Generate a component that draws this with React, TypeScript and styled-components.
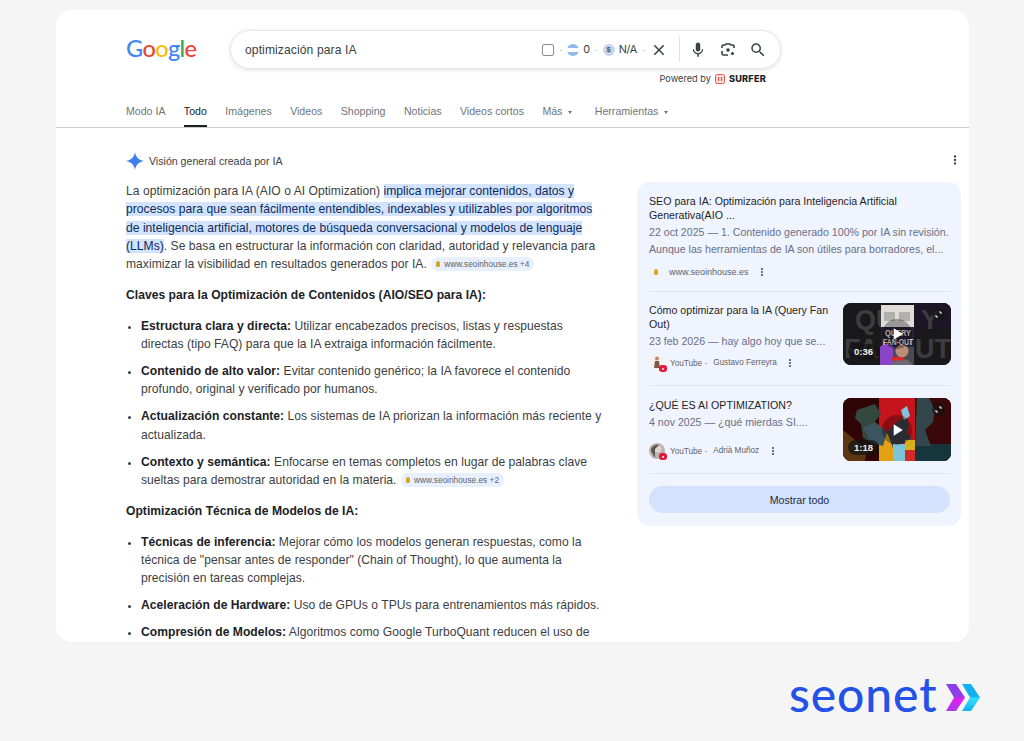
import React from 'react';
import styled, { createGlobalStyle } from 'styled-components';
import { MdMic, MdSearch, MdClose, MdPlayArrow, MdMoreVert } from 'react-icons/md';

const GlobalStyle = createGlobalStyle`
  html, body {
    margin: 0;
    padding: 0;
    background: #f5f5f5;
    font-family: "Liberation Sans", Arial, sans-serif;
  }
`;

const Page = styled.div`
  width: 1024px;
  height: 741px;
  overflow: hidden;
  box-sizing: border-box;
  padding: 10px 55px 0 56px;
`;

const Card = styled.div`
  height: 632px;
  background: #fff;
  border-radius: 16px;
  overflow: hidden;
`;

// Cabecera
const Header = styled.div`
  display: flex;
  align-items: flex-start;
  padding: 20px 0 0 70px;
  height: 58px;
`;

const Logo = styled.div`
  width: 104px;
  padding-top: 3px;
  font-family: Lato, sans-serif;
  font-size: 23.5px;
  line-height: 30px;
  letter-spacing: -0.6px;
  font-weight: 500;
`;

const LogoLetter = styled.span<{ $c: string }>`
  color: ${p => p.$c};
`;

const SearchColumn = styled.div`
  width: 551px;
`;

const SearchBox = styled.div`
  height: 39px;
  box-sizing: border-box;
  border: 1px solid #e6e7ea;
  border-radius: 20px;
  box-shadow: 0 1px 4px rgba(32, 33, 36, 0.14);
  display: flex;
  align-items: center;
  padding: 0 13px 0 14px;
  background: #fff;
`;

const Query = styled.div`
  flex: 1;
  font-size: 12.1px;
  color: #3c4043;
  letter-spacing: 0.1px;
`;

const Check = styled.span`
  width: 10px;
  height: 10px;
  border: 1px solid #8a8d91;
  border-radius: 2px;
`;

const Dot = styled.span`
  color: #9aa0a6;
  font-size: 9px;
  margin: 0 5px;
`;

const Metric = styled.span`
  font-family: Inter, sans-serif;
  font-size: 10.8px;
  letter-spacing: -0.3px;
  color: #3c4043;
  margin-left: 4px;
`;

const SmallCircle = styled.span<{ $bg: string }>`
  width: 12px;
  height: 12px;
  border-radius: 50%;
  background: ${p => p.$bg};
  display: inline-flex;
  align-items: center;
  justify-content: center;
  font-size: 7.5px;
  font-weight: 700;
  color: #3c5578;
`;

const Flag = styled(SmallCircle)`
  background: linear-gradient(#8fbce6 0 34%, #fff 34% 66%, #8fbce6 66%);
`;

const IconButton = styled.span<{ $ml: number }>`
  display: inline-flex;
  margin-left: ${p => p.$ml}px;
  color: #3c4043;
`;

const VSep = styled.span`
  width: 1px;
  height: 25px;
  background: #dfe1e5;
  margin-left: 11px;
`;

const Powered = styled.div`
  display: flex;
  justify-content: flex-end;
  align-items: center;
  padding-right: 15px;
  margin-top: 4px;
  font-family: Inter, sans-serif;
  font-size: 9.2px;
  color: #3c4043;
  gap: 4px;
`;

const SurferName = styled.span`
  font-weight: 800;
  color: #202124;
  letter-spacing: 0.2px;
`;

// Pestañas
const Tabs = styled.div`
  display: flex;
  gap: 18.4px;
  padding: 17px 0 0 70px;
  height: 22px;
  border-bottom: 1px solid #c9cbcf;
  font-size: 10.6px;
`;

const Tab = styled.div<{ $active?: boolean }>`
  color: ${p => (p.$active ? '#202124' : '#70757a')};
  height: 22px;
  box-sizing: border-box;
  border-bottom: ${p => (p.$active ? '2px solid #202124' : '0')};
  white-space: nowrap;
  display: flex;
  align-items: flex-start;
  gap: 6px;
`;

const Caret = styled.span`
  margin: 6px 4px 0 0;
  width: 0;
  height: 0;
  border-left: 2.5px solid transparent;
  border-right: 2.5px solid transparent;
  border-top: 3px solid #70757a;
`;

// Cuerpo
const Body = styled.div`
  padding: 24px 0 0 70px;
  position: relative;
`;

const AiHeader = styled.div`
  display: flex;
  align-items: center;
  gap: 5px;
  font-size: 10.6px;
  color: #3c4043;
  height: 18px;
`;

const MoreTop = styled.span`
  position: absolute;
  right: 7px;
  top: 25px;
  color: #3c4043;
  display: flex;
`;

const Columns = styled.div`
  display: flex;
  margin-top: 12px;
`;

const Main = styled.div`
  width: 511px;
  font-size: 12.1px;
  line-height: 18.3px;
  color: #3c4043;
  letter-spacing: 0.03px;
`;

const Para = styled.div`
  margin: 0;
  white-space: nowrap;
`;

const Mark = styled.span`
  background: #d3e3fd;
  color: #0a2a5c;
`;

const Heading = styled.div`
  font-weight: 700;
  color: #202124;
  margin: 12.5px 0;
`;

const List = styled.ul`
  margin: 0;
  padding: 0 0 0 15px;
  list-style: disc;
`;

const Item = styled.li`
  margin-bottom: 8.7px;
  white-space: nowrap;

  &::marker {
    font-size: 11px;
  }
`;

const Strong = styled.b`
  color: #202124;
`;

const Chip = styled.span`
  display: inline-flex;
  align-items: center;
  gap: 4px;
  height: 14px;
  padding: 0 5px;
  margin-left: 1px;
  border-radius: 8px;
  background: #e8f0fe;
  font-size: 8.3px;
  color: #5f6368;
  vertical-align: 1px;
  letter-spacing: 0;
`;

const Bulb = styled.span`
  width: 4px;
  height: 6px;
  border-radius: 50% 50% 30% 30%;
  background: #d9a520;
  flex: none;
`;

// Panel lateral
const Side = styled.div`
  width: 324px;
  height: 344px;
  box-sizing: border-box;
  background: #f0f4fe;
  border-radius: 13px;
  padding: 12px 10px 0 12px;
`;

const Source = styled.div<{ $h: number; $mb: number }>`
  display: flex;
  justify-content: space-between;
  height: ${p => p.$h}px;
  border-bottom: 1px solid #dce6f7;
  margin-bottom: ${p => p.$mb}px;
`;

const SourceText = styled.div`
  min-width: 0;
`;

const Title = styled.div`
  font-size: 10.65px;
  line-height: 14.2px;
  color: #1f1f1f;
  white-space: nowrap;
`;

const Snippet = styled.div`
  font-size: 10.62px;
  line-height: 17px;
  color: #6a6f85;
  margin-top: 2px;
  white-space: nowrap;
`;

const Site = styled.div<{ $mt: number }>`
  display: flex;
  align-items: center;
  gap: 4px;
  font-size: 9px;
  color: #5f6368;
  margin-top: ${p => p.$mt}px;
  height: 14px;
  white-space: nowrap;
`;

const SiteIcon = styled.span`
  width: 14px;
  height: 14px;
  display: inline-flex;
  align-items: center;
  justify-content: center;
  margin-right: 2px;
`;

const Channel = styled.span`
  font-size: 8.2px;
  margin-top: 1px;
`;

const Author = styled.span`
  font-size: 8.2px;
  margin: -2px 0 0 2px;
`;

const Avatar = styled.span`
  position: relative;
  width: 16px;
  height: 16px;
  margin-right: 1px;
  flex: none;
`;

const AvatarArt = styled.svg`
  display: block;
  width: 16px;
  height: 16px;
`;

const YtBadge = styled.span`
  position: absolute;
  right: -2px;
  bottom: -1px;
  width: 8px;
  height: 7px;
  border-radius: 3px;
  background: #e8173f;
  display: flex;
  align-items: center;
  justify-content: center;

  &::after {
    content: '';
    width: 2px;
    height: 2px;
    border-radius: 50%;
    background: #fff;
  }
`;

const Dots = styled.span<{ $ml: number }>`
  display: inline-flex;
  margin-left: ${p => p.$ml}px;
  color: #50535a;
`;

const Thumb = styled.div<{ $h: number }>`
  position: relative;
  flex: none;
  width: 108px;
  height: ${p => p.$h}px;
  border-radius: 8px;
  overflow: hidden;
  background: #1a1a1c;
`;

const ThumbArt = styled.svg`
  display: block;
  width: 100%;
  height: 100%;
`;

const Play = styled.span`
  position: absolute;
  left: 39px;
  top: 50%;
  transform: translateY(-50%);
  width: 30px;
  height: 30px;
  display: flex;
  align-items: center;
  justify-content: center;
  color: #fff;
  border-radius: 50%;
  background: rgba(0, 0, 0, 0.3);
`;

const Duration = styled.span`
  position: absolute;
  left: 5px;
  bottom: 6px;
  padding: 2px 6px;
  border-radius: 9px;
  background: rgba(20, 20, 20, 0.7);
  font-size: 9.5px;
  font-weight: 700;
  color: #eee;
`;

const Expand = styled.span`
  position: absolute;
  right: 6px;
  top: 5px;
  width: 13px;
  height: 13px;
  border-radius: 50%;
  background: rgba(20, 20, 20, 0.65);
  display: flex;
  align-items: center;
  justify-content: center;
`;

const ShowAll = styled.div`
  height: 27px;
  width: 301px;
  border-radius: 14px;
  background: #d3e3fd;
  color: #1f2a44;
  font-size: 10.6px;
  display: flex;
  align-items: center;
  justify-content: center;
`;

const Brand = styled.div`
  position: absolute;
  left: 789px;
  top: 666px;
  display: flex;
  align-items: center;
  gap: 9px;
`;

const BrandName = styled.span`
  font-family: Lato, sans-serif;
  font-weight: 500;
  font-size: 48px;
  line-height: 56px;
  color: #2452e8;
  letter-spacing: 0.9px;
`;

const BrandMark = styled.svg`
  width: 34px;
  height: 27px;
  margin-top: 6px;
`;

const Spark = () => (
  <svg width="18" height="18" viewBox="0 0 18 18">
    <path d="M9 0c.7 5 3.6 8 9 9-5.4 1-8.3 4-9 9-.7-5-3.6-8-9-9 5.4-1 8.3-4 9-9z" fill="#3f7fee" />
  </svg>
);

const LensIcon = () => (
  <svg width="16" height="16" viewBox="0 0 16 16" fill="none" stroke="#3c4043" strokeWidth="1.6">
    <path d="M2 6V4.5A1.5 1.5 0 0 1 3.500 3H5l1-1h4l1 1h1.500A1.5 1.5 0 0 1 14 4.500V6" />
    <path d="M2 9v2.5A1.5 1.5 0 0 0 3.5 13H8" />
    <circle cx="8" cy="8" r="1.8" fill="#3c4043" stroke="none" />
    <circle cx="12.5" cy="11.5" r="1.5" fill="#3c4043" stroke="none" />
  </svg>
);

const SurferIcon = () => (
  <svg width="10" height="10" viewBox="0 0 10 10">
    <rect x=".5" y=".5" width="9" height="9" rx="2" fill="#fde3e0" stroke="#ea4b3c" />
    <path d="M3.5 3v4M6.5 3v4" stroke="#ea4b3c" strokeWidth="1.2" />
  </svg>
);

const ExpandIcon = () => (
  <svg width="7" height="7" viewBox="0 0 7 7" stroke="#fff" strokeWidth="1" fill="none">
    <path d="M4 1h2v2M3 6H1V4" />
  </svg>
);

const QueryArt = () => (
  <ThumbArt viewBox="0 0 108 62" preserveAspectRatio="none">
    <rect width="108" height="62" fill="#19191b" />
    <rect x="72" width="36" height="26" fill="#1d1426" />
    <g fontFamily="Liberation Sans" fontWeight="700" fontSize="27" fill="#3d3c3e">
      <text x="12" y="26">QU</text>
      <text x="78" y="26">Y</text>
      <text x="1" y="55">FA</text>
      <text x="72" y="55">UT</text>
    </g>
    <rect x="38" y="2" width="33" height="22" fill="#dedcd8" />
    <rect x="41" y="9" width="11" height="9" fill="#b2b0ac" />
    <rect x="56" y="9" width="11" height="9" fill="#b2b0ac" />
    <rect x="38" y="24" width="33" height="20" fill="#2a2038" />
    <path d="M37 44c3-4 10-4 14 0v18H37z" fill="#8a44c8" />
    <rect x="50" y="44" width="21" height="18" fill="#4a4a52" />
    <circle cx="59" cy="48" r="6.5" fill="#b88f78" />
    <path d="M49 62c1-8 18-8 20 0z" fill="#6a6a72" />
    <rect x="48" y="54" width="13" height="3.5" rx="1" fill="#e02828" />
    <g fontFamily="Liberation Sans" fontWeight="700" fontSize="9" fill="#efefef">
      <text x="42" y="33" textLength="26" lengthAdjust="spacingAndGlyphs">QUERY</text>
      <text x="40" y="42" textLength="30" lengthAdjust="spacingAndGlyphs">FAN-OUT</text>
    </g>
  </ThumbArt>
);

const KnightArt = () => (
  <ThumbArt viewBox="0 0 108 63" preserveAspectRatio="none">
    <rect width="108" height="63" fill="#300505" />
    <rect x="36" width="36" height="63" fill="#c5141c" />
    <path d="M36 30l14 10v23H36z" fill="#e3a012" />
    <path d="M0 32l12 10 12 9-2 12H0z" fill="#5c3610" />
    <path d="M72 0h36v63H72z" fill="#3a0808" />
    <path d="M72 46h36v17H72z" fill="#17363c" />
    <path d="M74 0h12l6 12-2 12-8 8 6 16H72z" fill="#33464c" />
    <path d="M14 12l18-6 6 10-10 12 8 10-2 10-14-8-2-14-6-6z" fill="#33483f" />
    <path d="M20 30l12-6 12 10-4 14-12-4z" fill="#3e5560" />
    <path d="M44 34l8-8 10-8 4 8-2 10 6 4-20 10z" fill="#3b3f47" />
    <path d="M58 12l6-4 3 10-6 4z" fill="#7ec4de" />
    <rect x="50" y="46" width="12" height="17" fill="#7cc4d8" />
    <rect x="62" y="42" width="10" height="10" fill="#d7b01e" />
    <rect x="62" y="52" width="10" height="11" fill="#d22a24" />
  </ThumbArt>
);

const FaceOne = () => (
  <AvatarArt viewBox="0 0 16 16">
    <circle cx="8" cy="8" r="8" fill="#f6f2f0" />
    <circle cx="8" cy="3.5" r="2" fill="#b98a6e" />
    <path d="M6 6h4l1 7H5z" fill="#7d5a48" />
  </AvatarArt>
);

const FaceTwo = () => (
  <AvatarArt viewBox="0 0 16 16">
    <circle cx="8" cy="8" r="8" fill="#bdb3ae" />
    <circle cx="9" cy="6" r="3.5" fill="#ded5d0" />
    <path d="M2 8c0-5 5-7 8-6L6 6v9z" fill="#5c5450" />
  </AvatarArt>
);

export default function App() {
  return (
    <Page>
      <GlobalStyle />
      <Card>
        <Header>
          <Logo>
            <LogoLetter $c="#4285f4">G</LogoLetter>
            <LogoLetter $c="#ea4335">o</LogoLetter>
            <LogoLetter $c="#fbbc05">o</LogoLetter>
            <LogoLetter $c="#4285f4">g</LogoLetter>
            <LogoLetter $c="#34a853">l</LogoLetter>
            <LogoLetter $c="#ea4335">e</LogoLetter>
          </Logo>
          <SearchColumn>
            <SearchBox>
              <Query>optimización para IA</Query>
              <Check />
              <Dot>·</Dot>
              <Flag $bg="#8fbce6" />
              <Metric>0</Metric>
              <Dot>·</Dot>
              <SmallCircle $bg="#c9d6ea">$</SmallCircle>
              <Metric>N/A</Metric>
              <Dot>·</Dot>
              <IconButton $ml={0}><MdClose size={18} /></IconButton>
              <VSep />
              <IconButton $ml={9}><MdMic size={18} /></IconButton>
              <IconButton $ml={13}><LensIcon /></IconButton>
              <IconButton $ml={13}><MdSearch size={18} /></IconButton>
            </SearchBox>
            <Powered>
              <span>Powered by</span>
              <SurferIcon />
              <SurferName>SURFER</SurferName>
            </Powered>
          </SearchColumn>
        </Header>
        <Tabs>
          <Tab>Modo IA</Tab>
          <Tab $active>Todo</Tab>
          <Tab>Imágenes</Tab>
          <Tab>Videos</Tab>
          <Tab>Shopping</Tab>
          <Tab>Noticias</Tab>
          <Tab>Videos cortos</Tab>
          <Tab>Más <Caret /></Tab>
          <Tab>Herramientas <Caret /></Tab>
        </Tabs>
        <Body>
          <AiHeader><Spark /> Visión general creada por IA</AiHeader>
          <MoreTop><MdMoreVert size={14} /></MoreTop>
          <Columns>
            <Main>
              <Para>
                La optimización para IA (AIO o AI Optimization) <Mark>implica mejorar contenidos, datos y</Mark><br />
                <Mark>procesos para que sean fácilmente entendibles, indexables y utilizables por algoritmos</Mark><br />
                <Mark>de inteligencia artificial, motores de búsqueda conversacional y modelos de lenguaje</Mark><br />
                <Mark>(LLMs)</Mark>. Se basa en estructurar la información con claridad, autoridad y relevancia para<br />
                maximizar la visibilidad en resultados generados por IA. <Chip><Bulb />www.seoinhouse.es +4</Chip>
              </Para>
              <Heading>Claves para la Optimización de Contenidos (AIO/SEO para IA):</Heading>
              <List>
                <Item><Strong>Estructura clara y directa:</Strong> Utilizar encabezados precisos, listas y respuestas<br />directas (tipo FAQ) para que la IA extraiga información fácilmente.</Item>
                <Item><Strong>Contenido de alto valor:</Strong> Evitar contenido genérico; la IA favorece el contenido<br />profundo, original y verificado por humanos.</Item>
                <Item><Strong>Actualización constante:</Strong> Los sistemas de IA priorizan la información más reciente y<br />actualizada.</Item>
                <Item><Strong>Contexto y semántica:</Strong> Enfocarse en temas completos en lugar de palabras clave<br />sueltas para demostrar autoridad en la materia. <Chip><Bulb />www.seoinhouse.es +2</Chip></Item>
              </List>
              <Heading>Optimización Técnica de Modelos de IA:</Heading>
              <List>
                <Item><Strong>Técnicas de inferencia:</Strong> Mejorar cómo los modelos generan respuestas, como la<br />técnica de "pensar antes de responder" (Chain of Thought), lo que aumenta la<br />precisión en tareas complejas.</Item>
                <Item><Strong>Aceleración de Hardware:</Strong> Uso de GPUs o TPUs para entrenamientos más rápidos.</Item>
                <Item><Strong>Compresión de Modelos:</Strong> Algoritmos como Google TurboQuant reducen el uso de</Item>
              </List>
            </Main>
            <Side>
              <Source $h={97} $mb={11}>
                <SourceText>
                  <Title>SEO para IA: Optimización para Inteligencia Artificial<br />Generativa(AIO ...</Title>
                  <Snippet>22 oct 2025 — 1. Contenido generado 100% por IA sin revisión.<br />Aunque las herramientas de IA son útiles para borradores, el...</Snippet>
                  <Site $mt={7}>
                    <SiteIcon><Bulb /></SiteIcon>
                    www.seoinhouse.es
                    <Dots $ml={3}><MdMoreVert size={12} /></Dots>
                  </Site>
                </SourceText>
              </Source>
              <Source $h={82} $mb={12}>
                <SourceText>
                  <Title>Cómo optimizar para la IA (Query Fan<br />Out)</Title>
                  <Snippet>23 feb 2026 — hay algo hoy que se...</Snippet>
                  <Site $mt={6}>
                    <Avatar><FaceOne /><YtBadge /></Avatar>
                    <Channel>YouTube ·</Channel>
                    <Author>Gustavo Ferreyra</Author>
                    <Dots $ml={3}><MdMoreVert size={12} /></Dots>
                  </Site>
                </SourceText>
                <Thumb $h={62}>
                  <QueryArt />
                  <Play><MdPlayArrow size={20} /></Play>
                  <Duration>0:36</Duration>
                  <Expand><ExpandIcon /></Expand>
                </Thumb>
              </Source>
              <Source $h={75} $mb={12}>
                <SourceText>
                  <Title>¿QUÉ ES AI OPTIMIZATION?</Title>
                  <Snippet>4 nov 2025 — ¿qué mierdas SI....</Snippet>
                  <Site $mt={13}>
                    <Avatar><FaceTwo /><YtBadge /></Avatar>
                    <Channel>YouTube ·</Channel>
                    <Author>Adrià Muñoz</Author>
                    <Dots $ml={4}><MdMoreVert size={12} /></Dots>
                  </Site>
                </SourceText>
                <Thumb $h={63}>
                  <KnightArt />
                  <Play><MdPlayArrow size={20} /></Play>
                  <Duration>1:18</Duration>
                  <Expand><ExpandIcon /></Expand>
                </Thumb>
              </Source>
              <ShowAll>Mostrar todo</ShowAll>
            </Side>
          </Columns>
        </Body>
      </Card>
      <Brand>
        <BrandName>seonet</BrandName>
        <BrandMark viewBox="0 0 34 27">
          <defs>
            <linearGradient id="chevA" x1="0" y1="0" x2="0" y2="1">
              <stop offset="0.45" stopColor="#8d3ee6" />
              <stop offset="0.55" stopColor="#e41ff2" />
              <stop offset="1" stopColor="#a33be8" />
            </linearGradient>
            <linearGradient id="chevB" x1="0" y1="0" x2="0" y2="1">
              <stop offset="0.45" stopColor="#12b0f2" />
              <stop offset="0.55" stopColor="#2fe0f5" />
              <stop offset="1" stopColor="#12b0f2" />
            </linearGradient>
          </defs>
          <path d="M0 0h10l9 13.5-9 13.5H0l8-13.5z" fill="url(#chevA)" />
          <path d="M16 0h9l9 13.5-9 13.5h-9l8-13.5z" fill="url(#chevB)" />
        </BrandMark>
      </Brand>
    </Page>
  );
}
